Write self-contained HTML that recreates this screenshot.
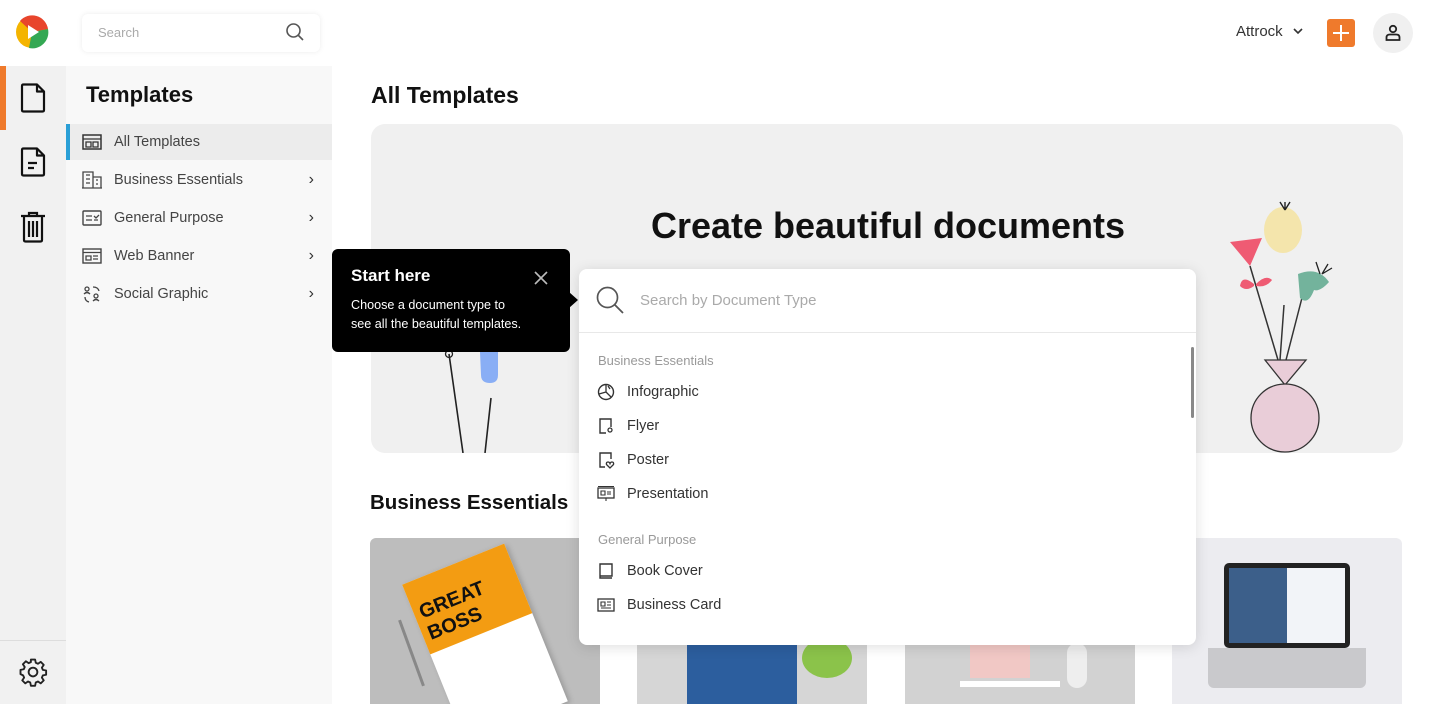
<!DOCTYPE html>
<html><head><meta charset="utf-8">
<style>
*{box-sizing:border-box;margin:0;padding:0}
html,body{width:1440px;height:704px;overflow:hidden}
body{background:#fff;font-family:"Liberation Sans",sans-serif;color:#222;position:relative}
.abs{position:absolute}
.rail{left:0;top:66px;width:66px;height:638px;background:#f1f1f1}
.side{left:66px;top:66px;width:266px;height:638px;background:#f8f8f8}
.item{position:absolute;left:0;width:266px;height:36px;font-size:14.5px;color:#444;display:flex;align-items:center}
.item svg{margin-left:16px;margin-right:12px}
.item .chev{position:absolute;right:18px;font-size:16px;color:#333}
.dd-item{position:absolute;left:18px;font-size:14.5px;color:#333;display:flex;align-items:center}
.dd-item svg{margin-right:12px}
.dd-h{position:absolute;left:19px;font-size:13px;color:#999}
.card{position:absolute;top:538px;width:230px;height:166px;border-radius:6px 6px 0 0;overflow:hidden}
</style></head><body>

<svg class="abs" style="left:15px;top:15px" width="34" height="34" viewBox="0 0 34 34">
<circle cx="17" cy="17" r="16" fill="#f4b400"/>
<path d="M17 17 L5 6 A16 16 0 0 1 33 14Z" fill="#e8452c"/>
<path d="M17 17 L33 14 A16 16 0 0 1 14 33Z" fill="#34a853"/>
<path d="M13 10 L24 17 L13 24Z" fill="#fff"/>
</svg>
<div class="abs" style="left:82px;top:14px;width:238px;height:38px;border-radius:6px;background:#fff;box-shadow:0 0 6px rgba(0,0,0,.08)"></div>
<div class="abs" style="left:98px;top:25px;font-size:13px;color:#aaa">Search</div>
<svg class="abs" style="left:285px;top:22px" width="20" height="20" viewBox="0 0 20 20"><circle cx="8.5" cy="8.5" r="6.5" fill="none" stroke="#555" stroke-width="1.6"/><path d="M13.5 13.5L18 18" stroke="#555" stroke-width="1.6"/></svg>
<div class="abs" style="left:1236px;top:23px;font-size:15px;color:#333">Attrock</div>
<svg class="abs" style="left:1293px;top:28px" width="10" height="8"><path d="M1 1L5 5L9 1" fill="none" stroke="#333" stroke-width="1.6"/></svg>
<div class="abs" style="left:1327px;top:19px;width:28px;height:28px;background:#ef7a2c;border-radius:3px"></div>
<div class="abs" style="left:1340px;top:25px;width:2px;height:16px;background:#fff"></div>
<div class="abs" style="left:1333px;top:32px;width:16px;height:2px;background:#fff"></div>
<div class="abs" style="left:1373px;top:13px;width:40px;height:40px;border-radius:50%;background:#f0f0f0"></div>
<svg class="abs" style="left:1383px;top:23px" width="20" height="20" viewBox="0 0 20 20"><circle cx="10" cy="6" r="3.2" fill="none" stroke="#222" stroke-width="1.8"/><path d="M3.5 17 V14.5 Q3.5 11.5 7 11.5 H13 Q16.5 11.5 16.5 14.5 V17Z" fill="none" stroke="#222" stroke-width="1.8"/></svg>

<div class="abs rail"></div>
<div class="abs" style="left:0;top:66px;width:6px;height:64px;background:#ef7a2c"></div>
<svg class="abs" style="left:20px;top:83px" width="26" height="30" viewBox="0 0 26 30"><path d="M2 3 Q2 1.5 3.5 1.5 H17 L24 8.5 V27 Q24 28.5 22.5 28.5 H3.5 Q2 28.5 2 27Z M17 1.5 V8.5 H24" fill="none" stroke="#111" stroke-width="2.2" stroke-linejoin="round"/></svg>
<svg class="abs" style="left:20px;top:147px" width="26" height="30" viewBox="0 0 26 30"><path d="M2 3 Q2 1.5 3.5 1.5 H17 L24 8.5 V27 Q24 28.5 22.5 28.5 H3.5 Q2 28.5 2 27Z M17 1.5 V8.5 H24 M8 16 H17 M8 21 H14" fill="none" stroke="#111" stroke-width="2.2" stroke-linejoin="round"/></svg>
<svg class="abs" style="left:20px;top:211px" width="26" height="32" viewBox="0 0 26 32"><path d="M1 5 H25 M9 5 V2 H17 V5 M4 5 V29 Q4 30.5 5.5 30.5 H20.5 Q22 30.5 22 29 V5 M9 10 V26 M13 10 V26 M17 10 V26" fill="none" stroke="#111" stroke-width="2.2"/></svg>
<div class="abs" style="left:0;top:640px;width:66px;height:1px;background:#ddd"></div>
<svg class="abs" style="left:18px;top:657px" width="30" height="30" viewBox="0 0 24 24"><path d="M12 8.5a3.5 3.5 0 1 0 0 7a3.5 3.5 0 1 0 0-7z M10.3 2h3.4l.5 2.6 1.8.8 2.2-1.5 2.4 2.4-1.5 2.2.8 1.8 2.6.5v3.4l-2.6.5-.8 1.8 1.5 2.2-2.4 2.4-2.2-1.5-1.8.8-.5 2.6h-3.4l-.5-2.6-1.8-.8-2.2 1.5-2.4-2.4 1.5-2.2-.8-1.8L2 13.7v-3.4l2.6-.5.8-1.8-1.5-2.2 2.4-2.4 2.2 1.5 1.8-.8z" fill="none" stroke="#222" stroke-width="1.5" stroke-linejoin="round"/></svg>

<div class="abs side">
<div class="abs" style="left:20px;top:16px;font-size:22px;font-weight:bold;color:#111">Templates</div>
<div class="item" style="top:58px;background:#ececec;border-left:4px solid #2a9fd6">
<svg width="20" height="16" viewBox="0 0 20 16" style="margin-left:12px"><rect x="1" y="1" width="18" height="14" fill="none" stroke="#333" stroke-width="1.5"/><path d="M1 5H19M4 8H9V13H4Z M11 8H16V13H11Z" fill="none" stroke="#333" stroke-width="1.3"/></svg>All Templates</div>
<div class="item" style="top:96px"><svg width="20" height="18" viewBox="0 0 20 18"><path d="M1 17V1H11V17 M11 6H19V17 M0 17H20 M4 4H8M4 8H8M4 12H8M14 9H16M14 13H16" fill="none" stroke="#444" stroke-width="1.3"/></svg>Business Essentials<span class="chev">›</span></div>
<div class="item" style="top:134px"><svg width="20" height="16" viewBox="0 0 20 16"><rect x="1" y="1" width="18" height="14" rx="1" fill="none" stroke="#444" stroke-width="1.4"/><path d="M4 6H10M4 10H10M12 6L14 8L17 5M12 10H16" fill="none" stroke="#444" stroke-width="1.3"/></svg>General Purpose<span class="chev">›</span></div>
<div class="item" style="top:172px"><svg width="20" height="16" viewBox="0 0 20 16"><rect x="1" y="1" width="18" height="14" fill="none" stroke="#444" stroke-width="1.4"/><path d="M1 4.5H19M4 8H9V12H4ZM11 8H16M11 11H16" fill="none" stroke="#444" stroke-width="1.3"/></svg>Web Banner<span class="chev">›</span></div>
<div class="item" style="top:210px"><svg width="20" height="18" viewBox="0 0 20 18"><circle cx="5" cy="4" r="2" fill="none" stroke="#444" stroke-width="1.3"/><circle cx="14" cy="11" r="2" fill="none" stroke="#444" stroke-width="1.3"/><path d="M2 9Q5 6 8 9M11 16Q14 13 17 16M11 2Q16 2 17 6M3 12Q3 16 7 17" fill="none" stroke="#444" stroke-width="1.3"/></svg>Social Graphic<span class="chev">›</span></div>
</div>

<div class="abs" style="left:371px;top:82px;font-size:23px;font-weight:bold;color:#111">All Templates</div>
<div class="abs" style="left:371px;top:124px;width:1032px;height:329px;background:#f0f0f0;border-radius:14px"></div>
<div class="abs" style="left:371px;top:205px;width:1034px;text-align:center;font-size:36px;font-weight:bold;color:#111">Create beautiful documents</div>

<svg class="abs" style="left:440px;top:340px" width="80" height="113" viewBox="0 0 80 113"><path d="M9 14 L23 113 M51 58 L45 113" stroke="#222" stroke-width="1.6" fill="none"/><circle cx="9" cy="14" r="3.5" fill="none" stroke="#222" stroke-width="1.3"/><path d="M40 12 H58 V35 Q58 43 50 43 Q41 43 41 35Z" fill="#89aef5"/></svg>

<svg class="abs" style="left:1220px;top:180px" width="140" height="275" viewBox="0 0 140 275">
<path d="M10 62 L42 58 L30 86Z" fill="#ef5b73"/>
<path d="M30 86 L58 180 M64 125 L60 180 M84 110 L66 180" stroke="#333" stroke-width="1.5" fill="none"/>
<path d="M34 104 Q22 94 20 106 Q26 112 34 106Z M36 104 Q46 94 52 100 Q46 108 36 106Z" fill="#ef5b73"/>
<ellipse cx="63" cy="50" rx="19" ry="23" fill="#f4e3a0" opacity=".85"/>
<path d="M65 30 L65 22 M65 30 L60 22 M65 30 L70 22" stroke="#222" stroke-width="1.4"/>
<path d="M78 94 Q98 86 109 102 Q100 112 94 110 Q88 126 80 118Z" fill="#73b39c"/>
<path d="M100 94 L96 82 M102 94 L108 84 M102 94 L112 88" stroke="#222" stroke-width="1.3"/>
<path d="M45 180 H86 L65 205Z" fill="#e9cdd8" stroke="#333" stroke-width="1.3"/>
<circle cx="65" cy="238" r="34" fill="#e9cdd8" stroke="#333" stroke-width="1.3"/>
</svg>

<div class="abs" style="left:370px;top:491px;font-size:20.5px;font-weight:bold;color:#111">Business Essentials</div>

<div class="card" style="left:370px;background:#bdbdbd">
<div class="abs" style="left:60px;top:20px;width:110px;height:170px;background:#fff;transform:rotate(-22deg);box-shadow:2px 2px 6px rgba(0,0,0,.2)">
<div style="height:75px;background:#f39c12;color:#111;font-weight:bold;font-size:20px;padding:22px 6px">GREAT BOSS</div></div>
<div class="abs" style="left:40px;top:80px;width:3px;height:70px;background:#888;transform:rotate(-20deg)"></div>
</div>
<div class="card" style="left:637px;background:#d6d6d6">
<div class="abs" style="left:50px;top:100px;width:110px;height:70px;background:#2c5e9e"></div>
<div class="abs" style="left:165px;top:100px;width:50px;height:40px;border-radius:50%;background:#8bc34a"></div>
</div>
<div class="card" style="left:905px;background:#d2d2d2">
<div class="abs" style="left:65px;top:105px;width:60px;height:35px;background:#f1c8c5"></div>
<div class="abs" style="left:55px;top:143px;width:100px;height:6px;background:#fff"></div>
<div class="abs" style="left:162px;top:105px;width:20px;height:45px;border-radius:10px;background:#eee"></div>
</div>
<div class="card" style="left:1172px;background:#ececf0">
<div class="abs" style="left:52px;top:25px;width:126px;height:85px;background:#222;border-radius:5px;padding:5px"><div style="width:100%;height:100%;background:linear-gradient(90deg,#3c5f8a 50%,#f2f4f8 50%)"></div></div>
<div class="abs" style="left:36px;top:110px;width:158px;height:40px;background:#c9c9cc;border-radius:0 0 6px 6px"></div>
</div>

<div class="abs" style="left:579px;top:269px;width:617px;height:376px;background:#fff;border-radius:8px;box-shadow:0 2px 14px rgba(0,0,0,.13)">
<svg class="abs" style="left:16px;top:16px" width="30" height="30" viewBox="0 0 30 30"><circle cx="12.5" cy="12.5" r="10" fill="none" stroke="#555" stroke-width="1.7"/><path d="M20 20L28 28" stroke="#555" stroke-width="1.8"/></svg>
<div class="abs" style="left:61px;top:23px;font-size:15px;color:#aaa">Search by Document Type</div>
<div class="abs" style="left:0;top:63px;width:617px;height:1px;background:#e8e8e8"></div>
<div class="abs" style="left:612px;top:78px;width:3px;height:71px;background:#888;border-radius:2px"></div>
<div class="dd-h" style="top:84px">Business Essentials</div>
<div class="dd-item" style="top:114px"><svg width="18" height="18" viewBox="0 0 18 18"><circle cx="9" cy="9" r="7.5" fill="none" stroke="#333" stroke-width="1.4"/><path d="M9 1.5V9L2 11M9 9L14 14M11 3L13 6" fill="none" stroke="#333" stroke-width="1.3"/></svg>Infographic</div>
<div class="dd-item" style="top:148px"><svg width="18" height="18" viewBox="0 0 18 18"><path d="M9 16H3V2H14V10" fill="none" stroke="#333" stroke-width="1.4"/><circle cx="13" cy="13" r="2" fill="none" stroke="#333" stroke-width="1.3"/></svg>Flyer</div>
<div class="dd-item" style="top:182px"><svg width="18" height="18" viewBox="0 0 18 18"><path d="M8 16H3V2H14V8" fill="none" stroke="#333" stroke-width="1.4"/><path d="M13 17L9.5 13.5Q9 11 11 11Q12.5 11 13 12.5Q13.5 11 15 11Q17 11 16.5 13.5Z" fill="none" stroke="#333" stroke-width="1.3"/></svg>Poster</div>
<div class="dd-item" style="top:216px"><svg width="18" height="18" viewBox="0 0 18 18"><rect x="1" y="3" width="16" height="10" fill="none" stroke="#333" stroke-width="1.3"/><path d="M1 1.5H17M9 13V16M4 6H8V10H4ZM10 7H14M10 9H14" fill="none" stroke="#333" stroke-width="1.1"/></svg>Presentation</div>
<div class="dd-h" style="top:263px">General Purpose</div>
<div class="dd-item" style="top:293px"><svg width="18" height="18" viewBox="0 0 18 18"><path d="M3 2H15V14H3ZM3 14V16H15" fill="none" stroke="#333" stroke-width="1.4"/></svg>Book Cover</div>
<div class="dd-item" style="top:327px"><svg width="18" height="18" viewBox="0 0 18 18"><rect x="1" y="3" width="16" height="12" fill="none" stroke="#333" stroke-width="1.3"/><path d="M4 6H8V10H4ZM10 6H14M10 9H14M4 12H14" fill="none" stroke="#333" stroke-width="1.1"/></svg>Business Card</div>
</div>

<div class="abs" style="left:332px;top:249px;width:238px;height:103px;background:#000;border-radius:6px"></div>
<div class="abs" style="left:569px;top:292px;width:0;height:0;border-top:8px solid transparent;border-bottom:8px solid transparent;border-left:9px solid #000"></div>
<div class="abs" style="left:351px;top:266px;font-size:17px;font-weight:bold;color:#fff">Start here</div>
<svg class="abs" style="left:534px;top:271px" width="14" height="14"><path d="M1 1L13 13M13 1L1 13" stroke="#bbb" stroke-width="1.6"/></svg>
<div class="abs" style="left:351px;top:296px;font-size:12.6px;line-height:19px;color:#fff">Choose a document type to<br>see all the beautiful templates.</div>

</body></html>
